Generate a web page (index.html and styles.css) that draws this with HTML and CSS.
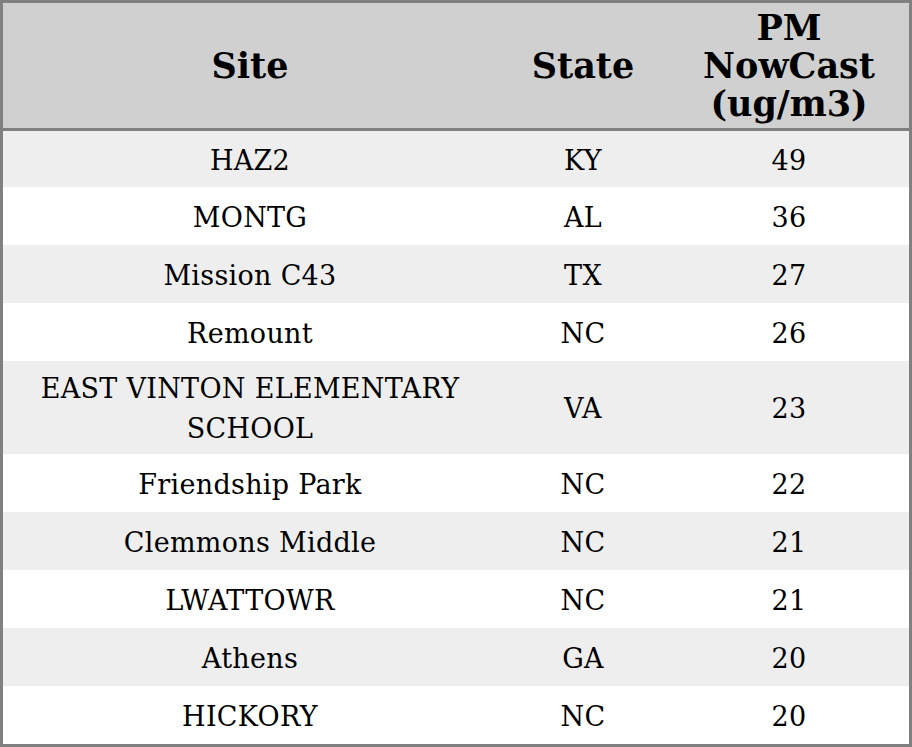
FILE: index.html
```html
<!DOCTYPE html>
<html>
<head>
<meta charset="utf-8">
<link rel="stylesheet" href="styles.css">
</head>
<body>
<table class="tbl">
  <thead>
    <tr><th class="c-site">Site</th><th class="c-state">State</th><th class="c-val">PM<br>NowCast<br>(ug/m3)</th></tr>
  </thead>
  <tbody>
    <tr class="first"><td>HAZ2</td><td>KY</td><td>49</td></tr>
    <tr><td>MONTG</td><td>AL</td><td>36</td></tr>
    <tr><td>Mission C43</td><td>TX</td><td>27</td></tr>
    <tr><td>Remount</td><td>NC</td><td>26</td></tr>
    <tr class="tall"><td>EAST VINTON ELEMENTARY<br>SCHOOL</td><td>VA</td><td>23</td></tr>
    <tr><td>Friendship Park</td><td>NC</td><td>22</td></tr>
    <tr><td>Clemmons Middle</td><td>NC</td><td>21</td></tr>
    <tr><td>LWATTOWR</td><td>NC</td><td>21</td></tr>
    <tr><td>Athens</td><td>GA</td><td>20</td></tr>
    <tr><td>HICKORY</td><td>NC</td><td>20</td></tr>
  </tbody>
</table>
</body>
</html>
```
FILE: styles.css
```css
html, body { margin: 0; padding: 0; background: #ffffff; }
.tbl {
  width: 912px;
  border-collapse: collapse;
  border: 3px solid #808080;
  font-family: "DejaVu Serif", serif;
  color: #000;
  table-layout: fixed;
}
.tbl th {
  background: #d0d0d0;
  font-size: 35px;
  font-weight: bold;
  line-height: 38px;
  height: 125px;
  padding: 0;
  border-bottom: 3px solid #808080;
  text-align: center;
}
.c-site { width: 494px; }
.c-state { width: 172px; }
.tbl td {
  font-size: 27px;
  letter-spacing: 0.3px;
  line-height: 40px;
  height: 55px;
  padding: 3px 0 0 0;
  text-align: center;
}
.tbl tbody tr:nth-child(odd) td { background: #eeeeee; }
.tbl tr.first td { height: 53px; }
.tbl tr.tall td { height: 90px; }
```
